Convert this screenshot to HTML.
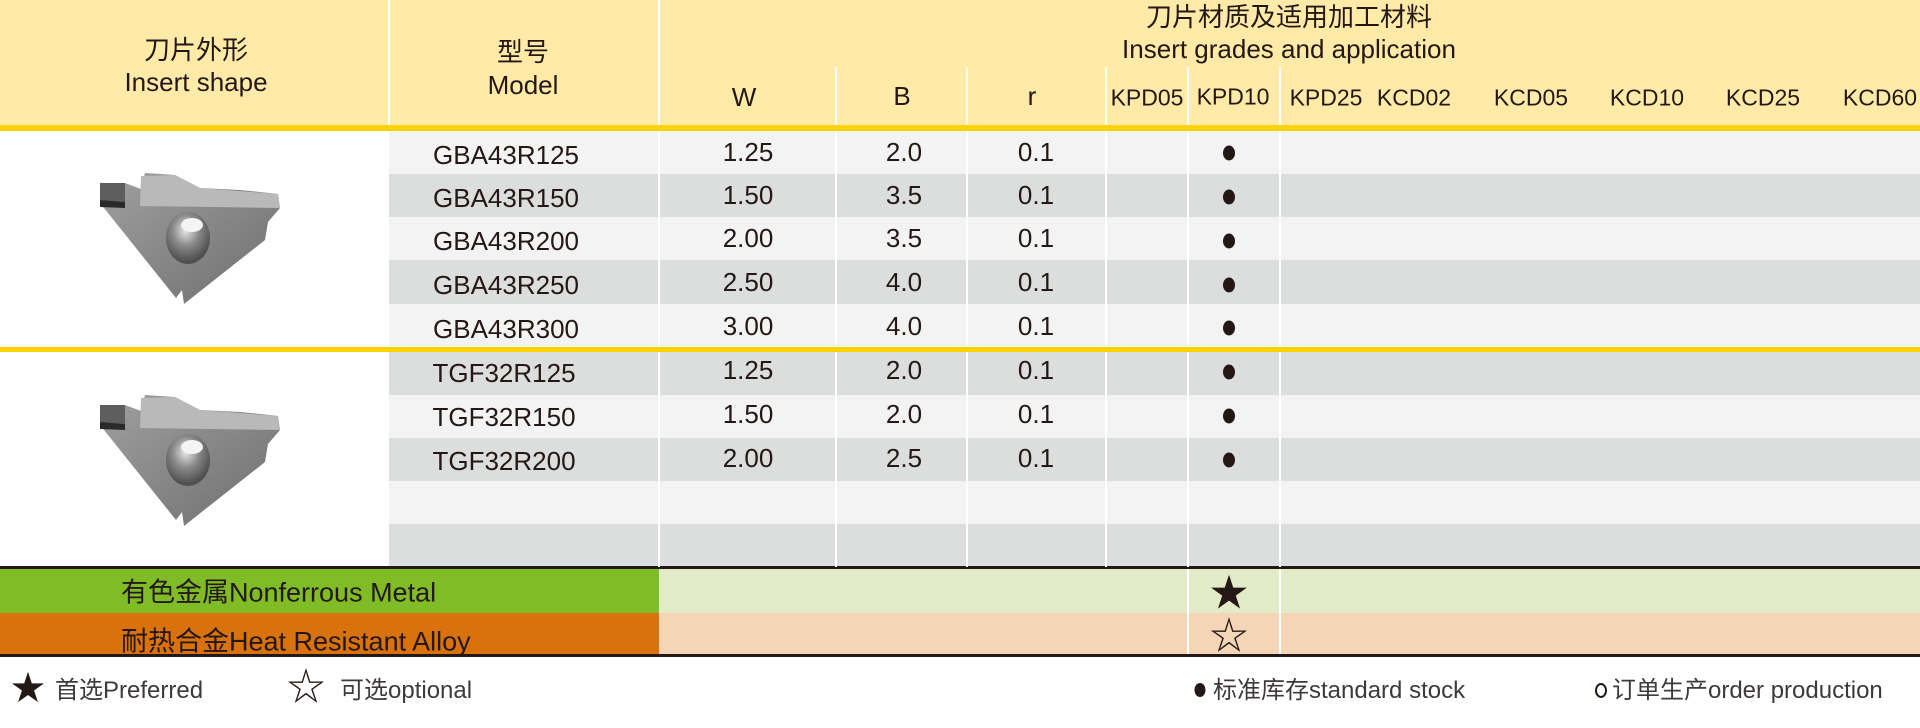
<!DOCTYPE html>
<html><head><meta charset="utf-8"><style>
*{margin:0;padding:0;box-sizing:border-box}
body{width:1920px;height:728px;background:#fff;position:relative;overflow:hidden;font-family:"Liberation Sans","Noto Sans CJK SC",sans-serif;color:#231815}
.a{position:absolute}
.t{position:absolute;white-space:nowrap;transform:translate(-50%,-50%);font-size:26px;line-height:1}
.tl{position:absolute;white-space:nowrap;transform:translateY(-50%);transform-origin:left center;font-size:26px;line-height:1}
.v{position:absolute;width:2px;background:#fff}
.dot{position:absolute;width:12px;height:15px;border-radius:50%;background:#231815;transform:translate(-50%,-50%)}
</style></head><body>
<div class="a" style="left:0;top:0;width:1920px;height:125px;background:#ffeaa8"></div>
<div class="a" style="left:0;top:125px;width:1920px;height:6px;background:#ffd200"></div>
<div class="a" style="left:389px;top:131px;width:1531px;height:436px;background:#f3f3f3"></div>
<div class="a" style="left:389px;top:174px;width:1531px;height:43px;background:#dcdddd"></div>
<div class="a" style="left:389px;top:260px;width:1531px;height:44px;background:#dcdddd"></div>
<div class="a" style="left:0;top:347px;width:1920px;height:5px;background:#ffd200"></div>
<div class="a" style="left:389px;top:352px;width:1531px;height:43px;background:#dcdddd"></div>
<div class="a" style="left:389px;top:438px;width:1531px;height:43px;background:#dcdddd"></div>
<div class="a" style="left:389px;top:524px;width:1531px;height:43px;background:#dcdddd"></div>
<div class="a" style="left:0;top:566px;width:1920px;height:3px;background:#231815"></div>
<div class="a" style="left:0;top:569px;width:659px;height:44px;background:#80bc26"></div>
<div class="a" style="left:659px;top:569px;width:1261px;height:44px;background:#e3ebc6"></div>
<div class="a" style="left:0;top:613px;width:659px;height:41px;background:#d9720c"></div>
<div class="a" style="left:659px;top:613px;width:1261px;height:41px;background:#f4d5b5"></div>
<div class="a" style="left:0;top:654px;width:1920px;height:3px;background:#231815"></div>
<!-- vertical lines -->
<div class="v" style="left:388px;top:0;height:125px"></div>
<div class="v" style="left:658px;top:0;height:125px"></div>
<div class="v" style="left:658px;top:131px;height:216px"></div><div class="v" style="left:658px;top:352px;height:215px"></div>
<div class="v" style="left:835px;top:67px;height:58px"></div><div class="v" style="left:835px;top:131px;height:216px"></div><div class="v" style="left:835px;top:352px;height:215px"></div>
<div class="v" style="left:966px;top:67px;height:58px"></div><div class="v" style="left:966px;top:131px;height:216px"></div><div class="v" style="left:966px;top:352px;height:215px"></div>
<div class="v" style="left:1105px;top:67px;height:58px"></div><div class="v" style="left:1105px;top:131px;height:216px"></div><div class="v" style="left:1105px;top:352px;height:215px"></div>
<div class="v" style="left:1187px;top:67px;height:58px"></div><div class="v" style="left:1187px;top:131px;height:216px"></div><div class="v" style="left:1187px;top:352px;height:215px"></div><div class="v" style="left:1187px;top:569px;height:85px"></div>
<div class="v" style="left:1279px;top:67px;height:58px"></div><div class="v" style="left:1279px;top:131px;height:216px"></div><div class="v" style="left:1279px;top:352px;height:215px"></div><div class="v" style="left:1279px;top:569px;height:85px"></div>
<!-- header text -->
<div class="t" style="left:196px;top:50px">刀片外形</div>
<div class="t" style="left:196px;top:82px">Insert shape</div>
<div class="t" style="left:523px;top:52px">型号</div>
<div class="t" style="left:523px;top:85px">Model</div>
<div class="t" style="left:1289px;top:17px">刀片材质及适用加工材料</div>
<div class="t" style="left:1289px;top:49px">Insert grades and application</div>
<div class="t" style="left:744px;top:97px">W</div>
<div class="t" style="left:902px;top:96px">B</div>
<div class="t" style="left:1032px;top:96px">r</div>
<div class="t" style="left:1147px;top:98px;font-size:23px">KPD05</div>
<div class="t" style="left:1233px;top:97px;font-size:23px">KPD10</div>
<div class="t" style="left:1326px;top:98px;font-size:23px">KPD25</div>
<div class="t" style="left:1414px;top:98px;font-size:23px">KCD02</div>
<div class="t" style="left:1531px;top:98px;font-size:23px">KCD05</div>
<div class="t" style="left:1647px;top:98px;font-size:23px">KCD10</div>
<div class="t" style="left:1763px;top:98px;font-size:23px">KCD25</div>
<div class="t" style="left:1880px;top:98px;font-size:23px">KCD60</div>
<!-- rows -->
<div class="t" style="left:506px;top:155px">GBA43R125</div><div class="t" style="left:748px;top:152px">1.25</div><div class="t" style="left:904px;top:152px">2.0</div><div class="t" style="left:1036px;top:152px">0.1</div><div class="dot" style="left:1229px;top:153px"></div>
<div class="t" style="left:506px;top:198px">GBA43R150</div><div class="t" style="left:748px;top:195px">1.50</div><div class="t" style="left:904px;top:195px">3.5</div><div class="t" style="left:1036px;top:195px">0.1</div><div class="dot" style="left:1229px;top:197px"></div>
<div class="t" style="left:506px;top:241px">GBA43R200</div><div class="t" style="left:748px;top:238px">2.00</div><div class="t" style="left:904px;top:238px">3.5</div><div class="t" style="left:1036px;top:238px">0.1</div><div class="dot" style="left:1229px;top:241px"></div>
<div class="t" style="left:506px;top:285px">GBA43R250</div><div class="t" style="left:748px;top:282px">2.50</div><div class="t" style="left:904px;top:282px">4.0</div><div class="t" style="left:1036px;top:282px">0.1</div><div class="dot" style="left:1229px;top:285px"></div>
<div class="t" style="left:506px;top:329px">GBA43R300</div><div class="t" style="left:748px;top:326px">3.00</div><div class="t" style="left:904px;top:326px">4.0</div><div class="t" style="left:1036px;top:326px">0.1</div><div class="dot" style="left:1229px;top:328px"></div>
<div class="t" style="left:504px;top:373px">TGF32R125</div><div class="t" style="left:748px;top:370px">1.25</div><div class="t" style="left:904px;top:370px">2.0</div><div class="t" style="left:1036px;top:370px">0.1</div><div class="dot" style="left:1229px;top:372px"></div>
<div class="t" style="left:504px;top:417px">TGF32R150</div><div class="t" style="left:748px;top:414px">1.50</div><div class="t" style="left:904px;top:414px">2.0</div><div class="t" style="left:1036px;top:414px">0.1</div><div class="dot" style="left:1229px;top:416px"></div>
<div class="t" style="left:504px;top:461px">TGF32R200</div><div class="t" style="left:748px;top:458px">2.00</div><div class="t" style="left:904px;top:458px">2.5</div><div class="t" style="left:1036px;top:458px">0.1</div><div class="dot" style="left:1229px;top:460px"></div>
<!-- inserts -->
<svg class="a" style="left:0;top:0" width="389" height="560">
<defs><linearGradient id="g" x1="0" y1="0" x2="1" y2="1"><stop offset="0" stop-color="#a0a0a0"/><stop offset="1" stop-color="#6e6e6e"/></linearGradient>
<radialGradient id="h" cx="0.45" cy="0.35" r="0.6"><stop offset="0" stop-color="#e8e8e8"/><stop offset="0.5" stop-color="#8a8a8a"/><stop offset="1" stop-color="#505050"/></radialGradient></defs>
<g id="ins">
<polygon points="100,203 100,183 125,183 141,189 145,173 175,175 200,188 240,190 260,192 278,194 280,208 268,222 265,240 184,304 182,290 176,298" fill="url(#g)"/>
<polygon points="141,176 175,175 200,188 278,194 280,208 140,206" fill="#b9b9b9"/>
<polygon points="100,183 125,183 125,202 100,200" fill="#5e5e5e"/>
<polygon points="100,200 125,202 125,208 100,207" fill="#2a2a2a"/>
<ellipse cx="188" cy="238" rx="22" ry="26" fill="url(#h)"/>
<ellipse cx="192" cy="225" rx="11" ry="7" fill="#f4f4f4"/>
</g>
<use href="#ins" transform="translate(0,222)"/>
</svg>
<!-- material rows -->
<div class="tl" style="left:121px;top:593px;font-size:27px">有色金属Nonferrous Metal</div>
<div class="tl" style="left:121px;top:642px;font-size:27px">耐热合金Heat Resistant Alloy</div>
<div class="t" style="left:1229px;top:594px;font-size:38px">★</div>
<div class="t" style="left:1229px;top:637px;font-size:38px">☆</div>
<!-- footer -->
<div class="t" style="left:28px;top:689px;font-size:34px">★</div>
<div class="tl" style="left:55px;top:691px;font-size:24px;color:#3e3a39">首选Preferred</div>
<div class="t" style="left:306px;top:688px;font-size:38px">☆</div>
<div class="tl" style="left:340px;top:691px;font-size:24px;color:#3e3a39">可选optional</div>
<div class="dot" style="left:1200px;top:690px;width:11px;height:14px"></div>
<div class="tl" style="left:1213px;top:691px;font-size:24px;color:#3e3a39">标准库存standard stock</div>
<div class="a" style="left:1595px;top:683px;width:12px;height:15px;border:2px solid #231815;border-radius:50%"></div>
<div class="tl" style="left:1612px;top:691px;font-size:24px;color:#3e3a39">订单生产order production</div>
</body></html>
